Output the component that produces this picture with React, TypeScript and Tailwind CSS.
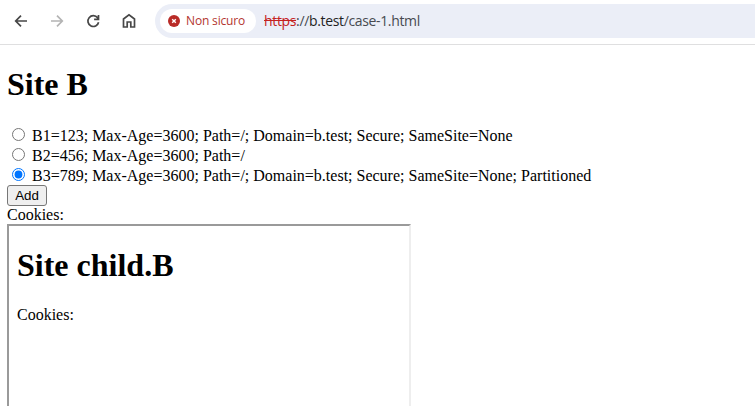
import { useState } from "react";

const options = [
  "B1=123; Max-Age=3600; Path=/; Domain=b.test; Secure; SameSite=None",
  "B2=456; Max-Age=3600; Path=/",
  "B3=789; Max-Age=3600; Path=/; Domain=b.test; Secure; SameSite=None; Partitioned",
];

function Toolbar() {
  return (
    <header className="flex h-[45px] items-start border-b border-[#dfdfe0] bg-white pt-1 font-['Open_Sans',sans-serif]">
      <nav className="flex h-[34px] w-[155px] shrink-0 items-center gap-4 pl-[11px] text-[#474747]">
        <svg className="size-5" viewBox="0 0 20 20" fill="none" stroke="currentColor" strokeWidth="1.7">
          <path d="M16 10H5M10 4.6 4.7 10l5.3 5.4" />
        </svg>
        <svg className="size-5 text-[#b4b4b4]" viewBox="0 0 20 20" fill="none" stroke="currentColor" strokeWidth="1.7">
          <path d="M4 10h11M10 4.6l5.3 5.4-5.3 5.4" />
        </svg>
        <svg className="size-5" viewBox="0 0 20 20" fill="none" stroke="currentColor" strokeWidth="1.7">
          <path d="M15.6 11.2A5.4 5.4 0 1 1 14.6 6.8L15.6 8M15.5 4v4.4h-4.4" />
        </svg>
        <svg className="size-5" viewBox="0 0 20 20" fill="none" stroke="currentColor" strokeWidth="1.7">
          <path d="M4.5 16V8L10 3.8 15.5 8v8h-3.7v-5H8.2v5z" />
        </svg>
      </nav>
      <div className="flex h-[34px] flex-1 items-center rounded-l-full bg-[#ebeef7] pl-[5px]">
        <div className="flex h-6 w-24 items-center rounded-full bg-white pl-2">
          <svg className="size-3" viewBox="0 0 12 12">
            <circle cx="6" cy="6" r="6" fill="#b92b27" />
            <path d="m4.2 4.2 3.6 3.6m0-3.6L4.2 7.8" stroke="#fff" strokeWidth="1.4" />
          </svg>
          <span className="ml-1.5 text-[12px] leading-4 tracking-[-0.16px] whitespace-nowrap text-[#b3352f]">Non sicuro</span>
        </div>
        <span className="ml-2 text-[14px] leading-5 tracking-[-0.35px] whitespace-nowrap text-[#474a50]">
          <span className="text-[#c5221f] line-through">https</span>://<span className="text-[#1f1f1f]">b.test</span>/case-1.html
        </span>
      </div>
    </header>
  );
}

export default function App() {
  const [selected, setSelected] = useState(2);
  return (
    <div className="h-[406px] overflow-hidden bg-white font-['Liberation_Serif',serif] text-[16px] text-black">
      <Toolbar />
      <main className="pl-[7px]">
        <h1 className="pt-[21px] text-[32px] leading-[37px] font-bold">Site B</h1>
        <div className="mt-[22px]">
          {options.map((label, i) => (
            <label key={label} className="flex h-5 items-start whitespace-nowrap">
              <input
                type="radio"
                name="cookie"
                checked={selected === i}
                onChange={() => setSelected(i)}
                className="mt-[3px] mr-[7px] ml-[5px] size-[13px]"
              />
              <span className="leading-[22px]">{label}</span>
            </label>
          ))}
        </div>
        <button className="block h-[21px] w-10 rounded-[3px] border border-[#767676] bg-[#efefef] font-['Liberation_Sans',sans-serif] text-[13.333px] leading-[18px]">
          Add
        </button>
        <div className="h-[18px] leading-[18px]">Cookies:</div>
        <section className="h-[200px] w-[404px] border-2 border-t-[#9a9a9a] border-r-[#eeeeee] border-b-[#eeeeee] border-l-[#9a9a9a] pl-2">
          <h1 className="pt-[21px] text-[32px] leading-[37px] font-bold">Site child.B</h1>
          <div className="mt-[22px] leading-[18px]">Cookies:</div>
        </section>
      </main>
    </div>
  );
}
